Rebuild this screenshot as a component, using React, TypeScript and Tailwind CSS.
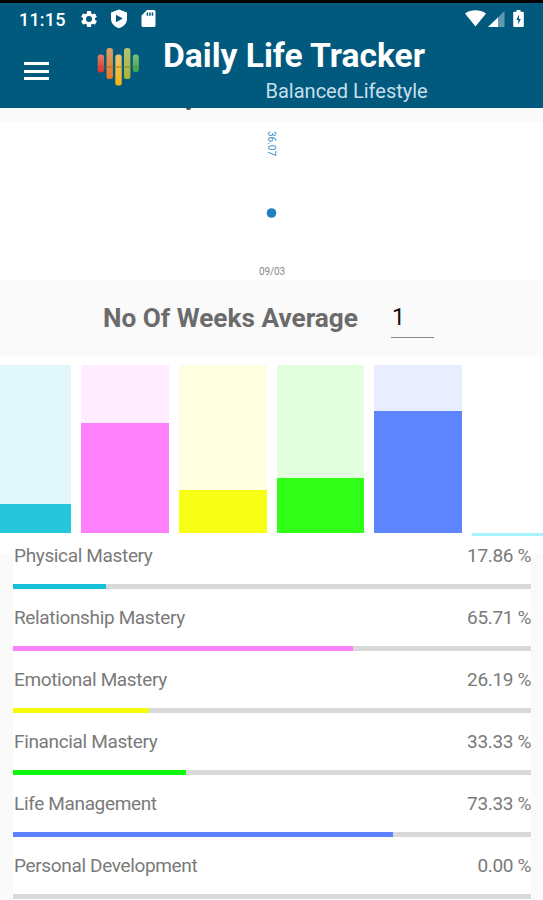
import clsx from 'clsx';

interface Mastery {
  name: string;
  value: number;
  bar: string;
}

const masteries: Mastery[] = [
  { name: 'Physical Mastery', value: 17.86, bar: 'bg-[#16c0d6]' },
  { name: 'Relationship Mastery', value: 65.71, bar: 'bg-[#ff80ff]' },
  { name: 'Emotional Mastery', value: 26.19, bar: 'bg-[#f6fb0a]' },
  { name: 'Financial Mastery', value: 33.33, bar: 'bg-[#0cf80c]' },
  { name: 'Life Management', value: 73.33, bar: 'bg-[#5c82ff]' },
  { name: 'Personal Development', value: 0, bar: 'bg-[#84ffff]' },
];

const columns = [
  { track: 'bg-[#e2f7fb]', fill: 'bg-[#26c6dd]', height: 29.5 },
  { track: 'bg-[#ffecff]', fill: 'bg-[#ff80fb]', height: 110 },
  { track: 'bg-[#feffe0]', fill: 'bg-[#f7ff14]', height: 43 },
  { track: 'bg-[#e4ffe0]', fill: 'bg-[#32ff17]', height: 55.5 },
  { track: 'bg-[#e8eeff]', fill: 'bg-[#5c85ff]', height: 122.5 },
];

function StatusBar() {
  return (
    <div className="flex h-[29px] items-start border-t-[3px] border-black pl-[19px] pr-[18px] text-white">
      <span className="mt-[6px] w-[60px] whitespace-nowrap text-[18px] font-medium leading-[22px] tracking-[0.2px]">
        11:15
      </span>
      <svg className="mt-[6px] size-5" viewBox="0 0 24 24" fill="currentColor">
        <path d="M19.14 12.94c.04-.3.06-.61.06-.94 0-.32-.02-.64-.07-.94l2.03-1.58a.49.49 0 0 0 .12-.61l-1.92-3.32a.49.49 0 0 0-.59-.22l-2.39.96a7 7 0 0 0-1.62-.94l-.36-2.54a.48.48 0 0 0-.48-.41h-3.84a.48.48 0 0 0-.47.41l-.36 2.54c-.59.24-1.13.57-1.62.94l-2.39-.96a.48.48 0 0 0-.59.22L2.74 8.87a.48.48 0 0 0 .12.61l2.03 1.58c-.05.3-.09.63-.09.94s.02.64.07.94l-2.03 1.58a.49.49 0 0 0-.12.61l1.92 3.32c.12.22.37.29.59.22l2.39-.96c.5.38 1.03.7 1.62.94l.36 2.54c.05.24.24.41.48.41h3.84c.24 0 .44-.17.47-.41l.36-2.54a7 7 0 0 0 1.62-.94l2.39.96c.22.08.47 0 .59-.22l1.92-3.32a.48.48 0 0 0-.12-.61zM12 15.6a3.6 3.6 0 1 1 0-7.2 3.6 3.6 0 0 1 0 7.2" />
      </svg>
      <svg className="mt-[6px] ml-[11px] h-[20px] w-[18px]" viewBox="0 0 18 20" fill="currentColor">
        <path
          fillRule="evenodd"
          d="M9 .5 17 3.6V10c0 4.3-3.2 7.6-8 9.3C4.2 17.6 1 14.3 1 10V3.6zM6 5.8v7.4l6.8-3.7z"
        />
      </svg>
      <svg className="mt-[6px] ml-[13px] h-[19px] w-[15px]" viewBox="0 0 15 19" fill="currentColor">
        <path
          fillRule="evenodd"
          d="M6 1h7a1.5 1.5 0 0 1 1.5 1.5v14A1.5 1.5 0 0 1 13 18H2A1.500 1.500 0 0 1 .5 16.5V6.5zM5.7 3.5v3.300h1.500V3.500zm2.500 0v3.300h1.500V3.500zm2.500 0v3.300h1.500V3.500z"
        />
      </svg>
      <div className="ml-auto flex pt-[6px]">
        <svg className="h-[19px] w-[60px]" viewBox="0 0 60 19" fill="currentColor">
          <path d="M0 4.500C6 .2 15 .2 21 4.500L10.500 17.500z" />
          <path d="M39.500 2v16H23z" opacity=".38" />
          <path d="M33 8.500V18H23z" />
          <path
            fillRule="evenodd"
            d="M51.500 1h4v1.700h2.300a1 1 0 0 1 1 1V17a1 1 0 0 1-1 1h-8.600a1 1 0 0 1-1-1V3.700a1 1 0 0 1 1-1h2.300zM54 5.500 51.500 11h1.800v4.500l2.500-5.500H54z"
          />
        </svg>
      </div>
    </div>
  );
}

function Logo() {
  return (
    <svg className="mt-[18px] ml-[48px] h-[40px] w-[42px]" viewBox="0 0 42 40">
      <defs>
        <linearGradient id="red" x2="0" y2="1">
          <stop offset="0" stopColor="#d98368" />
          <stop offset="1" stopColor="#e5302c" />
        </linearGradient>
        <linearGradient id="orange" x2="0" y2="1">
          <stop offset="0" stopColor="#dba06c" />
          <stop offset="1" stopColor="#e87a20" />
        </linearGradient>
        <linearGradient id="amber" x2="0" y2="1">
          <stop offset="0" stopColor="#e3c277" />
          <stop offset="1" stopColor="#fbb40c" />
        </linearGradient>
        <linearGradient id="lime" x2="0" y2="1">
          <stop offset="0" stopColor="#b5c276" />
          <stop offset="1" stopColor="#a9b535" />
        </linearGradient>
        <linearGradient id="green" x2="0" y2="1">
          <stop offset="0" stopColor="#7dbd80" />
          <stop offset="1" stopColor="#3aa648" />
        </linearGradient>
      </defs>
      <rect x=".7" y="7.500" width="6.400" height="18" rx="2.500" fill="url(#red)" />
      <rect x="9.500" y="1" width="6.400" height="31" rx="2.500" fill="url(#orange)" />
      <rect x="18.300" y="7.500" width="6.400" height="31" rx="2.500" fill="url(#amber)" />
      <rect x="27" y="1" width="6.400" height="31" rx="2.500" fill="url(#lime)" />
      <rect x="35.800" y="7.500" width="6" height="17.500" rx="2.500" fill="url(#green)" />
      <path d="M1 20h40" stroke="#7a5a20" strokeOpacity=".3" strokeWidth="2" />
    </svg>
  );
}

function Header() {
  return (
    <header className="h-[108px] shrink-0 bg-[#01597e]">
      <StatusBar />
      <div className="flex h-[79px]">
        <div className="mt-[33px] ml-[24px] flex w-[25px] flex-col gap-[4.5px]">
          <span className="h-[3px] bg-white" />
          <span className="h-[3px] bg-white" />
          <span className="h-[3px] bg-white" />
        </div>
        <Logo />
        <div className="ml-[24px] w-[265px] whitespace-nowrap">
          <h1 className="mt-[7px] text-[33.6px] font-bold leading-[40px] text-white">
            Daily Life Tracker
          </h1>
          <p className="mt-[3px] pl-[102.5px] text-[20px] leading-[24px] text-[#c8dfea]">
            Balanced Lifestyle
          </p>
        </div>
      </div>
    </header>
  );
}

function WeekChart() {
  return (
    <section className="h-[158px] shrink-0 bg-white">
      <svg
        className="block h-[158px] w-[543px]"
        viewBox="0 0 543 158"
        fontFamily="Roboto, sans-serif"
      >
        <text transform="translate(268 9) rotate(90)" fontSize="10" fill="#3b8fc6" textLength="25">
          36.07
        </text>
        <circle cx="271.5" cy="91" r="4.8" fill="#1f7fbf" />
        <text x="259" y="152.5" fontSize="10" fill="#888" textLength="26">
          09/03
        </text>
      </svg>
    </section>
  );
}

function MasteryColumns() {
  return (
    <section className="flex h-[198px] shrink-0 gap-[10px] overflow-hidden bg-white pt-[9.4px]">
      {columns.map(({ track, fill, height }, i) => (
        <div
          key={i}
          className={clsx(
            'flex h-[168px] shrink-0 flex-col justify-end',
            i === 0 ? 'w-[71.4px]' : 'w-[87.7px]',
            track,
          )}
        >
          <div className={fill} style={{ height }} />
        </div>
      ))}
      <div className="mt-[167.6px] h-[3px] grow bg-[#a8f5ff]" />
    </section>
  );
}

function MasteryRow({ name, value, bar }: Mastery) {
  return (
    <li className="h-[62.1px] shrink-0">
      <div className="flex justify-between pt-[1px] pl-px text-[19px] leading-[22px] tracking-[-0.35px] text-[#7a7a7a]">
        <span>{name}</span>
        <span>{value.toFixed(2)} %</span>
      </div>
      <div className="mt-[17px] h-[5px] bg-[#d9d9d9]">
        <div className={clsx('h-full', bar)} style={{ width: `${value}%` }} />
      </div>
    </li>
  );
}

export default function App() {
  return (
    <div className="flex h-[900px] w-[543px] flex-col overflow-hidden bg-[#fafafa] font-[Roboto,sans-serif]">
      <Header />
      <div className="h-[14px] shrink-0 pl-[186px]">
        <div className="h-[2px] w-[5px] rounded-b-full bg-[#555]" />
      </div>
      <WeekChart />
      <div className="flex h-[76px] shrink-0 pl-[103px]">
        <h2 className="w-[288px] pt-[22px] whitespace-nowrap text-[26.2px] font-bold leading-[32px] text-[#6b6b6b]">
          No Of Weeks Average
        </h2>
        <div className="h-[58px] w-[43px] border-b border-[#8a8a8a] pt-[22px] pl-px text-[23px] leading-[32px] text-[#111]">
          1
        </div>
      </div>
      <MasteryColumns />
      <ul className="-mt-[10.3px] mr-[12px] ml-[13px] flex grow flex-col bg-white">
        {masteries.map((mastery) => (
          <MasteryRow key={mastery.name} {...mastery} />
        ))}
      </ul>
    </div>
  );
}
